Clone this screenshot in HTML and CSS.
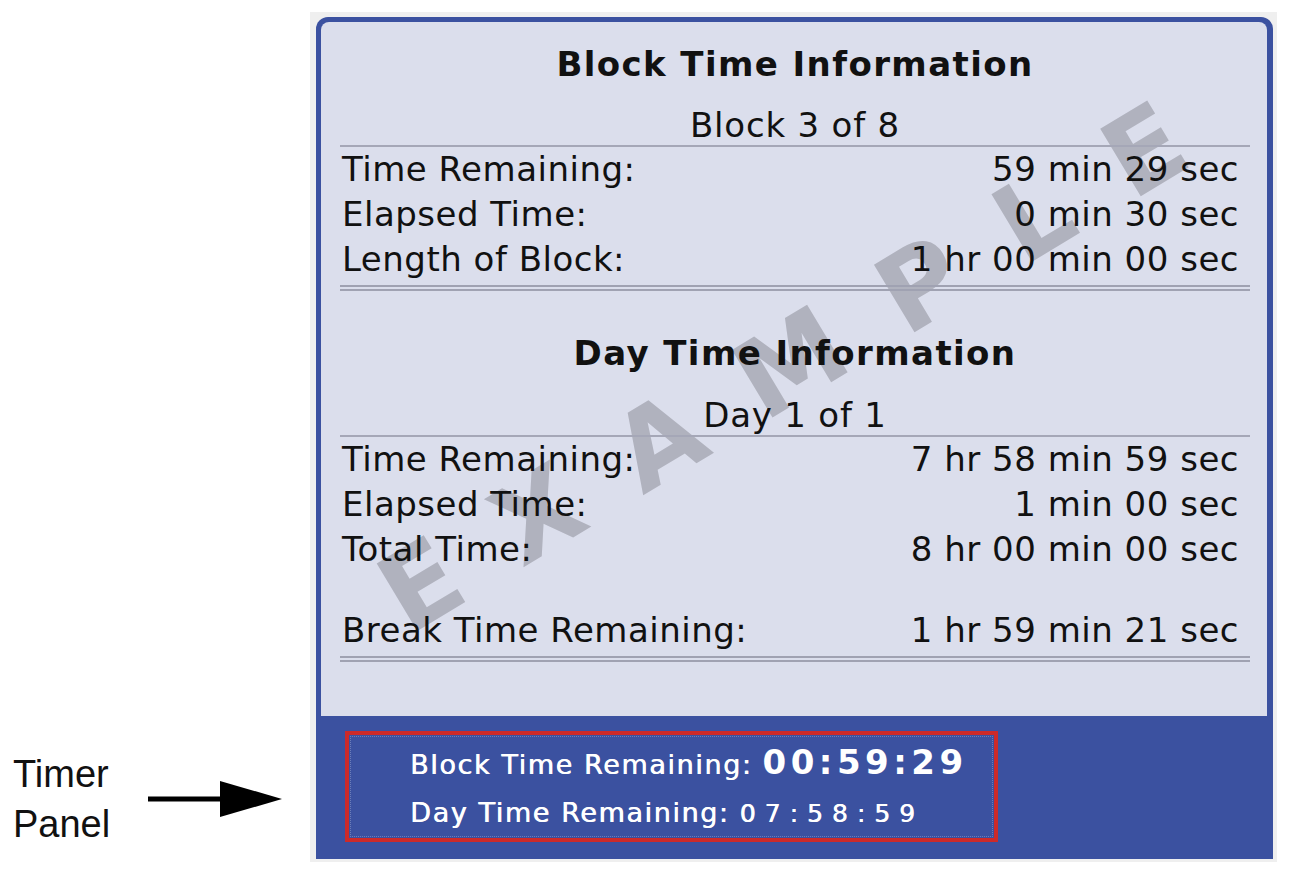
FILE: index.html
```html
<!DOCTYPE html>
<html lang="en">
<head>
<meta charset="utf-8">
<title>Timer Panel</title>
<link rel="stylesheet" href="styles.css">
</head>
<body>
<div class="page">
  <div class="annot">
    <div class="annot-label">Timer<br>Panel</div>
    <svg class="arrow" width="134" height="40" viewBox="0 0 134 40" aria-hidden="true">
      <line x1="0" y1="20" x2="76" y2="20" stroke="#000" stroke-width="5"/>
      <polygon points="72,2 134,20 72,38" fill="#000"/>
    </svg>
  </div>
  <div class="frame">
    <div class="panel">
      <div class="info">
        <div class="watermark">EXAMPLE</div>
        <div class="content">
          <div class="title">Block Time Information</div>
          <div class="sub">Block 3 of 8</div>
          <div class="row"><span>Time Remaining:</span><span>59 min 29 sec</span></div>
          <div class="row"><span>Elapsed Time:</span><span>0 min 30 sec</span></div>
          <div class="row"><span>Length of Block:</span><span>1 hr 00 min 00 sec</span></div>
          <div class="dbl"></div>

          <div class="title title-day">Day Time Information</div>
          <div class="sub sub-day">Day 1 of 1</div>
          <div class="row"><span>Time Remaining:</span><span>7 hr 58 min 59 sec</span></div>
          <div class="row"><span>Elapsed Time:</span><span>1 min 00 sec</span></div>
          <div class="row"><span>Total Time:</span><span>8 hr 00 min 00 sec</span></div>
          <div class="row row-break"><span>Break Time Remaining:</span><span>1 hr 59 min 21 sec</span></div>
          <div class="dbl"></div>
        </div>
      </div>
      <div class="timer">
        <div class="timer-box">
          <div class="tline">Block Time Remaining: <span class="big">00:59:29</span></div>
          <div class="tline">Day Time Remaining: <span class="small">07:58:59</span></div>
        </div>
      </div>
    </div>
  </div>
</div>
</body>
</html>
```

FILE: styles.css
```css
html, body {
  margin: 0;
  padding: 0;
  background: #ffffff;
}

body {
  font-family: "DejaVu Sans", Verdana, sans-serif;
  color: #111111;
}

.page {
  display: flex;
  padding-top: 12px;
}

.annot {
  width: 310px;
  box-sizing: border-box;
  padding-left: 13px;
  display: flex;
  align-items: center;
  align-self: flex-end;
  margin-bottom: 13px;
}

.annot-label {
  font-family: "Liberation Sans", Arial, sans-serif;
  font-size: 38px;
  line-height: 50px;
  color: #111;
  width: 99px;
}

.arrow {
  margin-left: 36px;
  display: block;
}

.frame {
  width: 967px;
  box-sizing: border-box;
  background: #efefef;
  padding: 5px 4px 3px 6px;
}

.panel {
  background: #3b51a0;
  border-radius: 12px 12px 0 0;
  padding-top: 5px;
}

.info {
  position: relative;
  margin: 0 6px 0 5px;
  background: #dbdeec;
  border-radius: 8px 8px 0 0;
  padding: 20px 17px 54px 19px;
  overflow: hidden;
}

.watermark {
  position: absolute;
  left: 462px;
  top: 346px;
  transform: translate(-50%, -50%) rotate(-31deg);
  font-size: 108px;
  font-weight: bold;
  letter-spacing: 58px;
  padding-left: 58px;
  color: #b0b2be;
  white-space: nowrap;
  line-height: 1;
  pointer-events: none;
}

.content {
  position: relative;
}

.title {
  text-align: center;
  font-size: 34px;
  font-weight: bold;
  letter-spacing: 1.4px;
  line-height: 45px;
}

.title-day {
  margin-top: 40px;
}

.sub {
  margin-top: 18px;
  text-align: center;
  font-size: 34px;
  letter-spacing: 0.8px;
  line-height: 40px;
  border-bottom: 2px solid #a5a7b7;
}

.sub-day {
  margin-top: 19px;
}

.row {
  display: flex;
  justify-content: space-between;
  font-size: 34px;
  letter-spacing: 0.5px;
  line-height: 45px;
  padding: 0 11px 0 2px;
}

.row-break {
  margin-top: 36px;
}

.dbl {
  margin-top: 3px;
  border-top: 6px double #a0a2b2;
}

.timer {
  padding: 15px 0 17px 29px;
}

.timer-box {
  width: 653px;
  box-sizing: border-box;
  border: 4px solid #cc2a2a;
  outline: 1px dotted rgba(255, 255, 255, 0.25);
  outline-offset: -6px;
  padding: 3px 0 0 61px;
}

.tline {
  color: #ffffff;
  font-size: 27px;
  letter-spacing: 1.6px;
  line-height: 48px;
  white-space: nowrap;
  text-shadow: 0.6px 0 0 #ffffff;
}

.big {
  font-size: 34px;
  font-weight: bold;
  letter-spacing: 4.5px;
  text-shadow: none;
}

.small {
  font-size: 25px;
  letter-spacing: 9px;
}
```
